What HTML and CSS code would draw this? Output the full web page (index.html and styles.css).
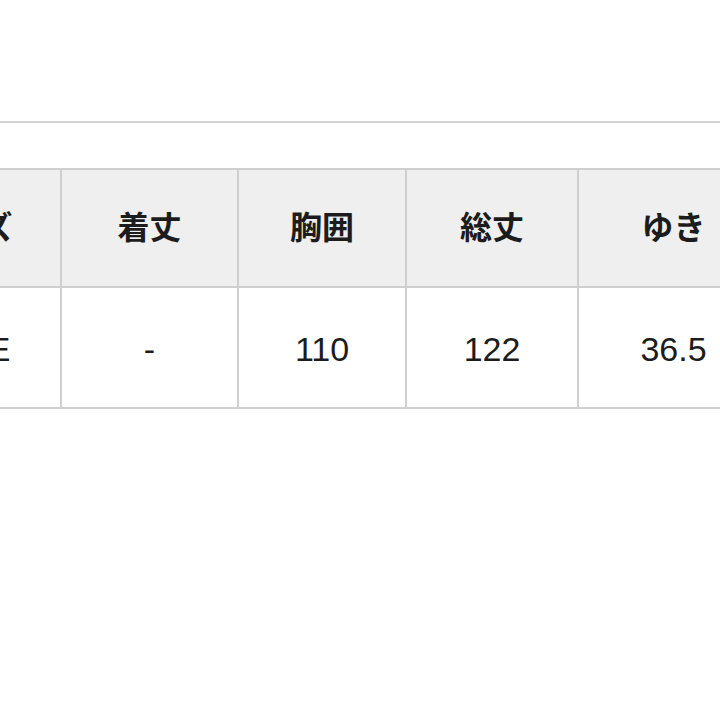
FILE: index.html
```html
<!DOCTYPE html>
<html lang="ja">
<head>
<meta charset="utf-8">
<link rel="stylesheet" href="styles.css">
</head>
<body>
<div class="page">
  <div class="divider"></div>
  <div class="table-wrap">
    <table class="size-table">
      <colgroup>
        <col class="c1"><col class="c2"><col class="c3"><col class="c4"><col class="c5">
      </colgroup>
      <thead>
        <tr>
          <th>サイズ</th>
          <th>着丈</th>
          <th>胸囲</th>
          <th>総丈</th>
          <th>ゆき</th>
        </tr>
      </thead>
      <tbody>
        <tr>
          <td>FREE</td>
          <td>-</td>
          <td>110</td>
          <td>122</td>
          <td>36.5</td>
        </tr>
      </tbody>
    </table>
  </div>
</div>
</body>
</html>
```
FILE: styles.css
```css
html, body {
  margin: 0;
  padding: 0;
  background: #ffffff;
}
.page {
  width: 720px;
  height: 720px;
  overflow: hidden;
  padding-top: 121px;
  box-sizing: border-box;
}
.divider {
  height: 2px;
  background: #d2d2d2;
}
.table-wrap {
  margin-top: 45px;
  width: 720px;
  overflow: hidden;
}
.size-table {
  margin-left: -132px;
  border-collapse: collapse;
  table-layout: fixed;
  width: 900px;
}
.c1 { width: 192px; }
.c2 { width: 177px; }
.c3 { width: 168px; }
.c4 { width: 172px; }
.c5 { width: 191px; }
.size-table th,
.size-table td {
  border: 2px solid #cfcfcf;
  text-align: center;
  vertical-align: middle;
  padding: 0;
  color: #1c1c1c;
}
.size-table th {
  height: 110px;
  padding-bottom: 6px;
  background: #efefef;
  font-family: "Noto Sans CJK JP", "Noto Sans", sans-serif;
  font-weight: 700;
  font-size: 32px;
}
.size-table td {
  height: 115px;
  padding-top: 4px;
  background: #ffffff;
  font-family: "Liberation Sans", Arial, sans-serif;
  font-weight: 400;
  font-size: 34px;
}
```
